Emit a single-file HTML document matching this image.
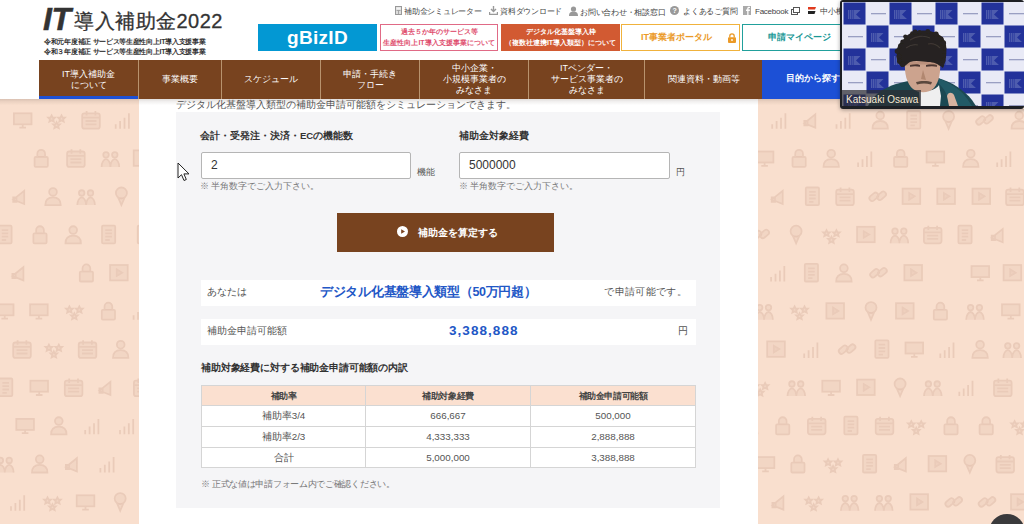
<!DOCTYPE html>
<html lang="ja">
<head>
<meta charset="utf-8">
<title>IT導入補助金2022</title>
<style>
*{box-sizing:border-box;margin:0;padding:0}
html,body{width:1024px;height:524px;overflow:hidden}
body{position:relative;background:#f9dfce;font-family:"Liberation Sans",sans-serif;color:#333}
.abs{position:absolute}
#header{position:absolute;left:0;top:0;width:1024px;height:99px;background:#fff}
.logo-it{position:absolute;left:43px;top:3px;-webkit-text-stroke:0.5px #333;font-size:32px;font-weight:bold;font-style:italic;color:#333;letter-spacing:-0.5px;line-height:32px}
.logo-jp{position:absolute;left:74px;top:10px;font-size:20px;color:#333;line-height:22px;letter-spacing:0.5px;-webkit-text-stroke:0.3px #333}
.sub{position:absolute;left:44px;font-size:7px;font-weight:bold;color:#333;line-height:8px;white-space:nowrap;letter-spacing:-0.3px}
.toplink{position:absolute;top:6px;font-size:8px;color:#444;line-height:10px;white-space:nowrap;letter-spacing:-0.25px}
.btn{position:absolute;top:24px;height:27px;text-align:center;white-space:nowrap}
#nav{position:absolute;left:39px;top:60px;height:39px;width:946px;background:#78431f}
.ni{position:absolute;top:0;height:39px;color:#fff;font-size:9px;line-height:11px;display:flex;align-items:center;justify-content:center;text-align:center;border-left:1px solid #b8936e}
#content{position:absolute;left:139px;top:99px;width:619px;height:425px;background:#fff}
#panel{position:absolute;left:176px;top:112px;width:544px;height:396px;background:#f5f5f7}
.lbl{font-size:9.5px;font-weight:bold;color:#333;white-space:nowrap;line-height:12px}
.inp{height:27px;background:#fff;border:1px solid #b5b5b5;border-radius:2px;font-size:12px;color:#333;padding-left:9px;line-height:25px}
.unit{font-size:9px;color:#555;line-height:11px}
.note{font-size:8.5px;color:#777;line-height:10px;white-space:nowrap}
.calc{background:#78431f;color:#fff;font-size:10px;font-weight:bold;text-align:center;line-height:40px}
.row{background:#fff}
.row span{white-space:nowrap;line-height:12px}
.blue{color:#2257c6;font-weight:bold;line-height:14px!important}
.tbl{border-collapse:collapse;font-size:9.8px;color:#555;background:#fff;width:495px;table-layout:fixed}
.tbl td{border:1px solid #d5d5d5;height:20px;text-align:center;padding:0;line-height:18px}
.tbl tr[style] td{height:21px}
.tbl .th td{background:#fbe0d0;font-weight:bold;font-size:9px;letter-spacing:-0.4px;color:#444}
</style>
</head>
<body>
<svg class="abs" style="left:0;top:99px" width="1024" height="425" viewBox="0 99 1024 425"><defs><filter id="ib"><feGaussianBlur stdDeviation="0.45"/></filter></defs><g fill="rgba(226,192,172,0.28)" stroke="#eacbb9" stroke-width="1.6" filter="url(#ib)"><g transform="translate(-22.3,110.0) scale(1.1)"><circle cx="5" cy="6" r="2.5"/><circle cx="13" cy="6" r="2.5"/><path d="M1 17c0-4 2-7 4-7s4 3 4 7M9 17c0-4 2-7 4-7s4 3 4 7"/></g><g transform="translate(12.8,110.0) scale(1.1)"><rect x="1" y="3" width="16" height="10"/><path d="M6 16h6M9 13v3"/></g><g transform="translate(47.2,110.0) scale(1.1)"><path d="M4 5l1 2h2l-1.5 1.5.5 2-2-1-2 1 .5-2L1 7h2zM13 5l1 2h2l-1.5 1.5.5 2-2-1-2 1 .5-2L10 7h2zM8.5 11l1 2h2l-1.5 1.5.5 2-2-1-2 1 .5-2L5.5 13h2z"/></g><g transform="translate(81.1,110.0) scale(1.1)"><rect x="1" y="3" width="16" height="14" rx="2"/><path d="M1 7h16M5 1v4M13 1v4M4 10h10M4 13h10"/></g><g transform="translate(113.5,110.0) scale(1.1)"><path d="M2 17v-4M6 17v-7M10 17v-10M14 17v-14"/></g><g transform="translate(31.3,148.2) scale(1.1)"><rect x="3" y="8" width="12" height="9" rx="1"/><path d="M5.5 8V5a3.5 3.5 0 0 1 7 0v3"/></g><g transform="translate(66.0,148.2) scale(1.1)"><rect x="1" y="3" width="16" height="14" rx="2"/><path d="M1 7h16M5 1v4M13 1v4M4 10h10M4 13h10"/></g><g transform="translate(100.5,148.2) scale(1.1)"><circle cx="5" cy="6" r="2.5"/><circle cx="13" cy="6" r="2.5"/><path d="M1 17c0-4 2-7 4-7s4 3 4 7M9 17c0-4 2-7 4-7s4 3 4 7"/></g><g transform="translate(132.6,148.2) scale(1.1)"><rect x="1" y="2" width="16" height="14"/><path d="M7 6v6l5-3z"/></g><g transform="translate(-23.0,186.4) scale(1.1)"><rect x="1" y="3" width="16" height="14" rx="2"/><path d="M1 7h16M5 1v4M13 1v4M4 10h10M4 13h10"/></g><g transform="translate(11.0,186.4) scale(1.1)"><path d="M2 12l10-8v12z M2 10v4h3v-4z"/></g><g transform="translate(43.1,186.4) scale(1.1)"><circle cx="9" cy="5" r="3.5"/><path d="M2 17c0-5 3-7 7-7s7 2 7 7z"/></g><g transform="translate(76.2,186.4) scale(1.1)"><circle cx="5" cy="6" r="2.5"/><circle cx="13" cy="6" r="2.5"/><path d="M1 17c0-4 2-7 4-7s4 3 4 7M9 17c0-4 2-7 4-7s4 3 4 7"/></g><g transform="translate(111.5,186.4) scale(1.1)"><circle cx="9" cy="6" r="5"/><path d="M6 10l3 7 3-7"/></g><g transform="translate(-4.9,224.6) scale(1.1)"><rect x="3" y="1" width="12" height="16" rx="1"/><path d="M6 5h6M6 8h6M6 11h6M6 14h4"/></g><g transform="translate(30.1,224.6) scale(1.1)"><rect x="3" y="8" width="12" height="9" rx="1"/><path d="M5.5 8V5a3.5 3.5 0 0 1 7 0v3"/></g><g transform="translate(63.3,224.6) scale(1.1)"><circle cx="9" cy="5" r="3.5"/><path d="M2 17c0-5 3-7 7-7s7 2 7 7z"/></g><g transform="translate(98.7,224.6) scale(1.1)"><rect x="3" y="1" width="12" height="16" rx="1"/><path d="M6 5h6M6 8h6M6 11h6M6 14h4"/></g><g transform="translate(134.4,224.6) scale(1.1)"><rect x="3" y="1" width="12" height="16" rx="1"/><path d="M6 5h6M6 8h6M6 11h6M6 14h4"/></g><g transform="translate(-22.6,262.8) scale(1.1)"><circle cx="9" cy="5" r="3.5"/><path d="M2 17c0-5 3-7 7-7s7 2 7 7z"/></g><g transform="translate(10.2,262.8) scale(1.1)"><path d="M2 12l10-8v12z M2 10v4h3v-4z"/></g><g transform="translate(76.5,262.8) scale(1.1)"><rect x="3" y="8" width="12" height="9" rx="1"/><path d="M5.5 8V5a3.5 3.5 0 0 1 7 0v3"/></g><g transform="translate(109.0,262.8) scale(1.1)"><rect x="1" y="2" width="16" height="14"/><path d="M7 6v6l5-3z"/></g><g transform="translate(-5.2,301.0) scale(1.1)"><rect x="1" y="3" width="16" height="10"/><path d="M6 16h6M9 13v3"/></g><g transform="translate(29.0,301.0) scale(1.1)"><rect x="1" y="3" width="16" height="10"/><path d="M6 16h6M9 13v3"/></g><g transform="translate(65.0,301.0) scale(1.1)"><path d="M4 5l1 2h2l-1.5 1.5.5 2-2-1-2 1 .5-2L1 7h2zM13 5l1 2h2l-1.5 1.5.5 2-2-1-2 1 .5-2L10 7h2zM8.5 11l1 2h2l-1.5 1.5.5 2-2-1-2 1 .5-2L5.5 13h2z"/></g><g transform="translate(98.5,301.0) scale(1.1)"><rect x="3" y="8" width="12" height="9" rx="1"/><path d="M5.5 8V5a3.5 3.5 0 0 1 7 0v3"/></g><g transform="translate(131.4,301.0) scale(1.1)"><path d="M2 17v-4M6 17v-7M10 17v-10M14 17v-14"/></g><g transform="translate(-21.4,339.2) scale(1.1)"><rect x="3" y="1" width="12" height="16" rx="1"/><path d="M6 5h6M6 8h6M6 11h6M6 14h4"/></g><g transform="translate(12.1,339.2) scale(1.1)"><rect x="1" y="3" width="16" height="14" rx="2"/><path d="M1 7h16M5 1v4M13 1v4M4 10h10M4 13h10"/></g><g transform="translate(44.5,339.2) scale(1.1)"><path d="M4 5l1 2h2l-1.5 1.5.5 2-2-1-2 1 .5-2L1 7h2zM13 5l1 2h2l-1.5 1.5.5 2-2-1-2 1 .5-2L10 7h2zM8.5 11l1 2h2l-1.5 1.5.5 2-2-1-2 1 .5-2L5.5 13h2z"/></g><g transform="translate(77.6,339.2) scale(1.1)"><rect x="1" y="3" width="16" height="14" rx="2"/><path d="M1 7h16M5 1v4M13 1v4M4 10h10M4 13h10"/></g><g transform="translate(110.8,339.2) scale(1.1)"><circle cx="9" cy="5" r="3.5"/><path d="M2 17c0-5 3-7 7-7s7 2 7 7z"/></g><g transform="translate(-4.2,377.4) scale(1.1)"><rect x="3" y="1" width="12" height="16" rx="1"/><path d="M6 5h6M6 8h6M6 11h6M6 14h4"/></g><g transform="translate(29.3,377.4) scale(1.1)"><rect x="1" y="3" width="16" height="10"/><path d="M6 16h6M9 13v3"/></g><g transform="translate(63.7,377.4) scale(1.1)"><rect x="1" y="3" width="16" height="14" rx="2"/><path d="M1 7h16M5 1v4M13 1v4M4 10h10M4 13h10"/></g><g transform="translate(97.2,377.4) scale(1.1)"><path d="M2 12l10-8v12z M2 10v4h3v-4z"/></g><g transform="translate(132.8,377.4) scale(1.1)"><rect x="1" y="3" width="16" height="14" rx="2"/><path d="M1 7h16M5 1v4M13 1v4M4 10h10M4 13h10"/></g><g transform="translate(-20.6,415.6) scale(1.1)"><circle cx="5" cy="6" r="2.5"/><circle cx="13" cy="6" r="2.5"/><path d="M1 17c0-4 2-7 4-7s4 3 4 7M9 17c0-4 2-7 4-7s4 3 4 7"/></g><g transform="translate(15.2,415.6) scale(1.1)"><rect x="1" y="3" width="16" height="10"/><path d="M6 16h6M9 13v3"/></g><g transform="translate(48.9,415.6) scale(1.1)"><circle cx="9" cy="5" r="3.5"/><path d="M2 17c0-5 3-7 7-7s7 2 7 7z"/></g><g transform="translate(83.0,415.6) scale(1.1)"><path d="M2 17v-4M6 17v-7M10 17v-10M14 17v-14"/></g><g transform="translate(117.8,415.6) scale(1.1)"><path d="M2 17v-4M6 17v-7M10 17v-10M14 17v-14"/></g><g transform="translate(-5.1,453.8) scale(1.1)"><circle cx="5" cy="6" r="2.5"/><circle cx="13" cy="6" r="2.5"/><path d="M1 17c0-4 2-7 4-7s4 3 4 7M9 17c0-4 2-7 4-7s4 3 4 7"/></g><g transform="translate(29.8,453.8) scale(1.1)"><circle cx="9" cy="5" r="3.5"/><path d="M2 17c0-5 3-7 7-7s7 2 7 7z"/></g><g transform="translate(63.7,453.8) scale(1.1)"><path d="M2 12l10-8v12z M2 10v4h3v-4z"/></g><g transform="translate(98.2,453.8) scale(1.1)"><path d="M2 17v-4M6 17v-7M10 17v-10M14 17v-14"/></g><g transform="translate(-23.4,492.0) scale(1.1)"><rect x="1" y="3" width="16" height="10"/><path d="M6 16h6M9 13v3"/></g><g transform="translate(8.8,492.0) scale(1.1)"><path d="M2 17v-4M6 17v-7M10 17v-10M14 17v-14"/></g><g transform="translate(43.1,492.0) scale(1.1)"><path d="M4 5l1 2h2l-1.5 1.5.5 2-2-1-2 1 .5-2L1 7h2zM13 5l1 2h2l-1.5 1.5.5 2-2-1-2 1 .5-2L10 7h2zM8.5 11l1 2h2l-1.5 1.5.5 2-2-1-2 1 .5-2L5.5 13h2z"/></g><g transform="translate(75.6,492.0) scale(1.1)"><rect x="1" y="3" width="16" height="10"/><path d="M6 16h6M9 13v3"/></g><g transform="translate(110.3,492.0) scale(1.1)"><circle cx="9" cy="6" r="5"/><path d="M6 10l3 7 3-7"/></g><g transform="translate(736.5,110.0) scale(1.1)"><rect x="3" y="1" width="12" height="16" rx="1"/><path d="M6 5h6M6 8h6M6 11h6M6 14h4"/></g><g transform="translate(770.0,110.0) scale(1.1)"><path d="M2 17v-4M6 17v-7M10 17v-10M14 17v-14"/></g><g transform="translate(802.1,110.0) scale(1.1)"><path d="M2 12l10-8v12z M2 10v4h3v-4z"/></g><g transform="translate(834.3,110.0) scale(1.1)"><path d="M2 17v-4M6 17v-7M10 17v-10M14 17v-14"/></g><g transform="translate(870.3,110.0) scale(1.1)"><circle cx="9" cy="5" r="3.5"/><path d="M2 17c0-5 3-7 7-7s7 2 7 7z"/></g><g transform="translate(903.8,110.0) scale(1.1)"><rect x="3" y="1" width="12" height="16" rx="1"/><path d="M6 5h6M6 8h6M6 11h6M6 14h4"/></g><g transform="translate(938.7,110.0) scale(1.1)"><circle cx="9" cy="6" r="5"/><path d="M6 10l3 7 3-7"/></g><g transform="translate(974.6,110.0) scale(1.1)"><rect x="1" y="7" width="9" height="5" rx="2.5" transform="rotate(-40 5.5 9.5)"/><rect x="8" y="6" width="9" height="5" rx="2.5" transform="rotate(-40 12.5 8.5)"/></g><g transform="translate(1009.3,110.0) scale(1.1)"><circle cx="9" cy="5" r="3.5"/><path d="M2 17c0-5 3-7 7-7s7 2 7 7z"/></g><g transform="translate(754.7,148.2) scale(1.1)"><rect x="1" y="3" width="16" height="10"/><path d="M6 16h6M9 13v3"/></g><g transform="translate(789.2,148.2) scale(1.1)"><rect x="3" y="8" width="12" height="9" rx="1"/><path d="M5.5 8V5a3.5 3.5 0 0 1 7 0v3"/></g><g transform="translate(821.3,148.2) scale(1.1)"><circle cx="9" cy="5" r="3.5"/><path d="M2 17c0-5 3-7 7-7s7 2 7 7z"/></g><g transform="translate(855.9,148.2) scale(1.1)"><path d="M2 17v-4M6 17v-7M10 17v-10M14 17v-14"/></g><g transform="translate(890.8,148.2) scale(1.1)"><rect x="3" y="8" width="12" height="9" rx="1"/><path d="M5.5 8V5a3.5 3.5 0 0 1 7 0v3"/></g><g transform="translate(925.5,148.2) scale(1.1)"><rect x="1" y="3" width="16" height="10"/><path d="M6 16h6M9 13v3"/></g><g transform="translate(960.9,148.2) scale(1.1)"><circle cx="9" cy="5" r="3.5"/><path d="M2 17c0-5 3-7 7-7s7 2 7 7z"/></g><g transform="translate(995.0,148.2) scale(1.1)"><path d="M2 17v-4M6 17v-7M10 17v-10M14 17v-14"/></g><g transform="translate(734.4,186.4) scale(1.1)"><circle cx="9" cy="6" r="5"/><path d="M6 10l3 7 3-7"/></g><g transform="translate(769.5,186.4) scale(1.1)"><path d="M2 12l10-8v12z M2 10v4h3v-4z"/></g><g transform="translate(802.5,186.4) scale(1.1)"><rect x="3" y="1" width="12" height="16" rx="1"/><path d="M6 5h6M6 8h6M6 11h6M6 14h4"/></g><g transform="translate(835.1,186.4) scale(1.1)"><rect x="1" y="3" width="16" height="14" rx="2"/><path d="M1 7h16M5 1v4M13 1v4M4 10h10M4 13h10"/></g><g transform="translate(867.8,186.4) scale(1.1)"><rect x="1" y="7" width="9" height="5" rx="2.5" transform="rotate(-40 5.5 9.5)"/><rect x="8" y="6" width="9" height="5" rx="2.5" transform="rotate(-40 12.5 8.5)"/></g><g transform="translate(901.5,186.4) scale(1.1)"><rect x="1" y="2" width="16" height="14"/><path d="M7 6v6l5-3z"/></g><g transform="translate(936.2,186.4) scale(1.1)"><rect x="1" y="2" width="16" height="14"/><path d="M7 6v6l5-3z"/></g><g transform="translate(971.4,186.4) scale(1.1)"><rect x="1" y="2" width="16" height="14"/><path d="M7 6v6l5-3z"/></g><g transform="translate(1005.0,186.4) scale(1.1)"><rect x="1" y="3" width="16" height="14" rx="2"/><path d="M1 7h16M5 1v4M13 1v4M4 10h10M4 13h10"/></g><g transform="translate(750.8,224.6) scale(1.1)"><rect x="1" y="7" width="9" height="5" rx="2.5" transform="rotate(-40 5.5 9.5)"/><rect x="8" y="6" width="9" height="5" rx="2.5" transform="rotate(-40 12.5 8.5)"/></g><g transform="translate(786.2,224.6) scale(1.1)"><circle cx="9" cy="6" r="5"/><path d="M6 10l3 7 3-7"/></g><g transform="translate(822.1,224.6) scale(1.1)"><path d="M4 5l1 2h2l-1.5 1.5.5 2-2-1-2 1 .5-2L1 7h2zM13 5l1 2h2l-1.5 1.5.5 2-2-1-2 1 .5-2L10 7h2zM8.5 11l1 2h2l-1.5 1.5.5 2-2-1-2 1 .5-2L5.5 13h2z"/></g><g transform="translate(856.0,224.6) scale(1.1)"><rect x="1" y="2" width="16" height="14"/><path d="M7 6v6l5-3z"/></g><g transform="translate(889.5,224.6) scale(1.1)"><circle cx="5" cy="6" r="2.5"/><circle cx="13" cy="6" r="2.5"/><path d="M1 17c0-4 2-7 4-7s4 3 4 7M9 17c0-4 2-7 4-7s4 3 4 7"/></g><g transform="translate(922.8,224.6) scale(1.1)"><rect x="1" y="3" width="16" height="14" rx="2"/><path d="M1 7h16M5 1v4M13 1v4M4 10h10M4 13h10"/></g><g transform="translate(955.1,224.6) scale(1.1)"><rect x="3" y="1" width="12" height="16" rx="1"/><path d="M6 5h6M6 8h6M6 11h6M6 14h4"/></g><g transform="translate(989.5,224.6) scale(1.1)"><path d="M2 12l10-8v12z M2 10v4h3v-4z"/></g><g transform="translate(1023.8,224.6) scale(1.1)"><path d="M2 17v-4M6 17v-7M10 17v-10M14 17v-14"/></g><g transform="translate(736.8,262.8) scale(1.1)"><rect x="3" y="8" width="12" height="9" rx="1"/><path d="M5.5 8V5a3.5 3.5 0 0 1 7 0v3"/></g><g transform="translate(768.9,262.8) scale(1.1)"><path d="M2 17v-4M6 17v-7M10 17v-10M14 17v-14"/></g><g transform="translate(801.5,262.8) scale(1.1)"><rect x="3" y="1" width="12" height="16" rx="1"/><path d="M6 5h6M6 8h6M6 11h6M6 14h4"/></g><g transform="translate(834.0,262.8) scale(1.1)"><circle cx="9" cy="5" r="3.5"/><path d="M2 17c0-5 3-7 7-7s7 2 7 7z"/></g><g transform="translate(868.6,262.8) scale(1.1)"><rect x="1" y="7" width="9" height="5" rx="2.5" transform="rotate(-40 5.5 9.5)"/><rect x="8" y="6" width="9" height="5" rx="2.5" transform="rotate(-40 12.5 8.5)"/></g><g transform="translate(903.3,262.8) scale(1.1)"><rect x="1" y="2" width="16" height="14"/><path d="M7 6v6l5-3z"/></g><g transform="translate(970.4,262.8) scale(1.1)"><rect x="1" y="3" width="16" height="10"/><path d="M6 16h6M9 13v3"/></g><g transform="translate(1002.5,262.8) scale(1.1)"><rect x="1" y="2" width="16" height="14"/><path d="M7 6v6l5-3z"/></g><g transform="translate(754.2,301.0) scale(1.1)"><circle cx="5" cy="6" r="2.5"/><circle cx="13" cy="6" r="2.5"/><path d="M1 17c0-4 2-7 4-7s4 3 4 7M9 17c0-4 2-7 4-7s4 3 4 7"/></g><g transform="translate(790.2,301.0) scale(1.1)"><path d="M4 5l1 2h2l-1.5 1.5.5 2-2-1-2 1 .5-2L1 7h2zM13 5l1 2h2l-1.5 1.5.5 2-2-1-2 1 .5-2L10 7h2zM8.5 11l1 2h2l-1.5 1.5.5 2-2-1-2 1 .5-2L5.5 13h2z"/></g><g transform="translate(825.3,301.0) scale(1.1)"><rect x="1" y="2" width="16" height="14"/><path d="M7 6v6l5-3z"/></g><g transform="translate(861.1,301.0) scale(1.1)"><circle cx="9" cy="6" r="5"/><path d="M6 10l3 7 3-7"/></g><g transform="translate(894.9,301.0) scale(1.1)"><rect x="1" y="2" width="16" height="14"/><path d="M7 6v6l5-3z"/></g><g transform="translate(930.5,301.0) scale(1.1)"><rect x="3" y="8" width="12" height="9" rx="1"/><path d="M5.5 8V5a3.5 3.5 0 0 1 7 0v3"/></g><g transform="translate(965.1,301.0) scale(1.1)"><circle cx="5" cy="6" r="2.5"/><circle cx="13" cy="6" r="2.5"/><path d="M1 17c0-4 2-7 4-7s4 3 4 7M9 17c0-4 2-7 4-7s4 3 4 7"/></g><g transform="translate(1000.9,301.0) scale(1.1)"><rect x="1" y="3" width="16" height="10"/><path d="M6 16h6M9 13v3"/></g><g transform="translate(733.6,339.2) scale(1.1)"><path d="M2 12l10-8v12z M2 10v4h3v-4z"/></g><g transform="translate(766.1,339.2) scale(1.1)"><rect x="1" y="2" width="16" height="14"/><path d="M7 6v6l5-3z"/></g><g transform="translate(802.0,339.2) scale(1.1)"><path d="M2 17v-4M6 17v-7M10 17v-10M14 17v-14"/></g><g transform="translate(837.2,339.2) scale(1.1)"><rect x="1" y="7" width="9" height="5" rx="2.5" transform="rotate(-40 5.5 9.5)"/><rect x="8" y="6" width="9" height="5" rx="2.5" transform="rotate(-40 12.5 8.5)"/></g><g transform="translate(872.0,339.2) scale(1.1)"><rect x="3" y="1" width="12" height="16" rx="1"/><path d="M6 5h6M6 8h6M6 11h6M6 14h4"/></g><g transform="translate(904.4,339.2) scale(1.1)"><rect x="1" y="3" width="16" height="10"/><path d="M6 16h6M9 13v3"/></g><g transform="translate(938.1,339.2) scale(1.1)"><path d="M2 17v-4M6 17v-7M10 17v-10M14 17v-14"/></g><g transform="translate(970.2,339.2) scale(1.1)"><circle cx="9" cy="5" r="3.5"/><path d="M2 17c0-5 3-7 7-7s7 2 7 7z"/></g><g transform="translate(1002.3,339.2) scale(1.1)"><circle cx="5" cy="6" r="2.5"/><circle cx="13" cy="6" r="2.5"/><path d="M1 17c0-4 2-7 4-7s4 3 4 7M9 17c0-4 2-7 4-7s4 3 4 7"/></g><g transform="translate(750.8,377.4) scale(1.1)"><path d="M4 5l1 2h2l-1.5 1.5.5 2-2-1-2 1 .5-2L1 7h2zM13 5l1 2h2l-1.5 1.5.5 2-2-1-2 1 .5-2L10 7h2zM8.5 11l1 2h2l-1.5 1.5.5 2-2-1-2 1 .5-2L5.5 13h2z"/></g><g transform="translate(786.4,377.4) scale(1.1)"><circle cx="5" cy="6" r="2.5"/><circle cx="13" cy="6" r="2.5"/><path d="M1 17c0-4 2-7 4-7s4 3 4 7M9 17c0-4 2-7 4-7s4 3 4 7"/></g><g transform="translate(821.2,377.4) scale(1.1)"><rect x="1" y="3" width="16" height="10"/><path d="M6 16h6M9 13v3"/></g><g transform="translate(856.0,377.4) scale(1.1)"><rect x="1" y="2" width="16" height="14"/><path d="M7 6v6l5-3z"/></g><g transform="translate(890.2,377.4) scale(1.1)"><circle cx="9" cy="6" r="5"/><path d="M6 10l3 7 3-7"/></g><g transform="translate(922.9,377.4) scale(1.1)"><circle cx="5" cy="6" r="2.5"/><circle cx="13" cy="6" r="2.5"/><path d="M1 17c0-4 2-7 4-7s4 3 4 7M9 17c0-4 2-7 4-7s4 3 4 7"/></g><g transform="translate(957.1,377.4) scale(1.1)"><path d="M2 17v-4M6 17v-7M10 17v-10M14 17v-14"/></g><g transform="translate(992.9,377.4) scale(1.1)"><rect x="1" y="3" width="16" height="14" rx="2"/><path d="M1 7h16M5 1v4M13 1v4M4 10h10M4 13h10"/></g><g transform="translate(738.8,415.6) scale(1.1)"><circle cx="5" cy="6" r="2.5"/><circle cx="13" cy="6" r="2.5"/><path d="M1 17c0-4 2-7 4-7s4 3 4 7M9 17c0-4 2-7 4-7s4 3 4 7"/></g><g transform="translate(772.8,415.6) scale(1.1)"><rect x="3" y="8" width="12" height="9" rx="1"/><path d="M5.5 8V5a3.5 3.5 0 0 1 7 0v3"/></g><g transform="translate(806.8,415.6) scale(1.1)"><rect x="1" y="3" width="16" height="14" rx="2"/><path d="M1 7h16M5 1v4M13 1v4M4 10h10M4 13h10"/></g><g transform="translate(841.0,415.6) scale(1.1)"><rect x="3" y="1" width="12" height="16" rx="1"/><path d="M6 5h6M6 8h6M6 11h6M6 14h4"/></g><g transform="translate(874.6,415.6) scale(1.1)"><rect x="1" y="3" width="16" height="14" rx="2"/><path d="M1 7h16M5 1v4M13 1v4M4 10h10M4 13h10"/></g><g transform="translate(906.9,415.6) scale(1.1)"><path d="M4 5l1 2h2l-1.5 1.5.5 2-2-1-2 1 .5-2L1 7h2zM13 5l1 2h2l-1.5 1.5.5 2-2-1-2 1 .5-2L10 7h2zM8.5 11l1 2h2l-1.5 1.5.5 2-2-1-2 1 .5-2L5.5 13h2z"/></g><g transform="translate(941.1,415.6) scale(1.1)"><rect x="3" y="8" width="12" height="9" rx="1"/><path d="M5.5 8V5a3.5 3.5 0 0 1 7 0v3"/></g><g transform="translate(976.3,415.6) scale(1.1)"><rect x="3" y="8" width="12" height="9" rx="1"/><path d="M5.5 8V5a3.5 3.5 0 0 1 7 0v3"/></g><g transform="translate(1010.2,415.6) scale(1.1)"><path d="M4 5l1 2h2l-1.5 1.5.5 2-2-1-2 1 .5-2L1 7h2zM13 5l1 2h2l-1.5 1.5.5 2-2-1-2 1 .5-2L10 7h2zM8.5 11l1 2h2l-1.5 1.5.5 2-2-1-2 1 .5-2L5.5 13h2z"/></g><g transform="translate(755.6,453.8) scale(1.1)"><rect x="1" y="3" width="16" height="10"/><path d="M6 16h6M9 13v3"/></g><g transform="translate(788.0,453.8) scale(1.1)"><rect x="3" y="8" width="12" height="9" rx="1"/><path d="M5.5 8V5a3.5 3.5 0 0 1 7 0v3"/></g><g transform="translate(823.7,453.8) scale(1.1)"><path d="M4 5l1 2h2l-1.5 1.5.5 2-2-1-2 1 .5-2L1 7h2zM13 5l1 2h2l-1.5 1.5.5 2-2-1-2 1 .5-2L10 7h2zM8.5 11l1 2h2l-1.5 1.5.5 2-2-1-2 1 .5-2L5.5 13h2z"/></g><g transform="translate(859.7,453.8) scale(1.1)"><rect x="3" y="1" width="12" height="16" rx="1"/><path d="M6 5h6M6 8h6M6 11h6M6 14h4"/></g><g transform="translate(892.6,453.8) scale(1.1)"><path d="M2 12l10-8v12z M2 10v4h3v-4z"/></g><g transform="translate(927.5,453.8) scale(1.1)"><rect x="1" y="2" width="16" height="14"/><path d="M7 6v6l5-3z"/></g><g transform="translate(959.9,453.8) scale(1.1)"><circle cx="9" cy="6" r="5"/><path d="M6 10l3 7 3-7"/></g><g transform="translate(995.3,453.8) scale(1.1)"><rect x="1" y="3" width="16" height="14" rx="2"/><path d="M1 7h16M5 1v4M13 1v4M4 10h10M4 13h10"/></g><g transform="translate(770.2,492.0) scale(1.1)"><path d="M2 12l10-8v12z M2 10v4h3v-4z"/></g><g transform="translate(804.3,492.0) scale(1.1)"><path d="M4 5l1 2h2l-1.5 1.5.5 2-2-1-2 1 .5-2L1 7h2zM13 5l1 2h2l-1.5 1.5.5 2-2-1-2 1 .5-2L10 7h2zM8.5 11l1 2h2l-1.5 1.5.5 2-2-1-2 1 .5-2L5.5 13h2z"/></g><g transform="translate(839.8,492.0) scale(1.1)"><circle cx="5" cy="6" r="2.5"/><circle cx="13" cy="6" r="2.5"/><path d="M1 17c0-4 2-7 4-7s4 3 4 7M9 17c0-4 2-7 4-7s4 3 4 7"/></g><g transform="translate(873.9,492.0) scale(1.1)"><circle cx="5" cy="6" r="2.5"/><circle cx="13" cy="6" r="2.5"/><path d="M1 17c0-4 2-7 4-7s4 3 4 7M9 17c0-4 2-7 4-7s4 3 4 7"/></g><g transform="translate(909.3,492.0) scale(1.1)"><rect x="1" y="2" width="16" height="14"/><path d="M7 6v6l5-3z"/></g><g transform="translate(943.8,492.0) scale(1.1)"><rect x="1" y="7" width="9" height="5" rx="2.5" transform="rotate(-40 5.5 9.5)"/><rect x="8" y="6" width="9" height="5" rx="2.5" transform="rotate(-40 12.5 8.5)"/></g><g transform="translate(977.1,492.0) scale(1.1)"><rect x="1" y="7" width="9" height="5" rx="2.5" transform="rotate(-40 5.5 9.5)"/><rect x="8" y="6" width="9" height="5" rx="2.5" transform="rotate(-40 12.5 8.5)"/></g><g transform="translate(1009.9,492.0) scale(1.1)"><rect x="1" y="2" width="16" height="14"/><path d="M7 6v6l5-3z"/></g></g></svg>
<div id="header">
  <div class="logo-it">IT</div>
  <div class="logo-jp">導入補助金2022</div>
  <div class="sub" style="top:38px">令和元年度補正 サービス等生産性向上IT導入支援事業</div>
  <div class="sub" style="top:48px">令和３年度補正 サービス等生産性向上IT導入支援事業</div>

  <div class="toplink" style="left:394px"><svg width="7" height="9" viewBox="0 0 7 9" style="vertical-align:-1.5px;margin-left:1px;margin-right:2px"><rect x="0.5" y="0.5" width="6" height="8" fill="#ddd" stroke="#999"/><path d="M1.5 4.5h4M3.5 4.5v3.5" stroke="#999" stroke-width="0.8"/><rect x="1.5" y="1.5" width="4" height="2" fill="#f4f4f4"/></svg>補助金シミュレーター</div>
  <div class="toplink" style="left:489px"><svg width="9" height="9" viewBox="0 0 9 9" style="vertical-align:-1px;margin-right:2px"><path d="M4.5 0v5M2 3l2.5 2.5L7 3M0.5 6v2.5h8V6" stroke="#999" stroke-width="1.4" fill="none"/></svg>資料ダウンロード</div>
  <div class="toplink" style="left:569px"><svg width="9" height="10" viewBox="0 0 9 10" style="vertical-align:-1px;margin-right:2px"><circle cx="4.5" cy="3" r="2.6" fill="#999"/><path d="M0 10c0-3.5 2-4.5 4.5-4.5S9 6.5 9 10z" fill="#999"/></svg>お問い合わせ・相談窓口</div>
  <div class="toplink" style="left:670px"><svg width="9" height="9" viewBox="0 0 9 9" style="vertical-align:-1px;margin-right:4px"><circle cx="4.5" cy="4.5" r="4.5" fill="#999"/><text x="4.5" y="7.3" font-size="7" font-weight="bold" fill="#fff" text-anchor="middle" font-family="Liberation Sans">?</text></svg>よくあるご質問</div>
  <div class="toplink" style="left:743px"><svg width="8" height="9" viewBox="0 0 8 9" style="vertical-align:-1px;margin-right:4px"><rect width="8" height="9" fill="#aaa"/><path d="M5.5 9V5h1.3l.2-1.4H5.5V2.8c0-.4.1-.7.7-.7H7V.9C6.8.9 6.400.8 6 .8 5 .8 4.2 1.4 4.2 2.6v1H3V5h1.2v4z" fill="#fff"/></svg>Facebook<svg width="9" height="8" viewBox="0 0 9 8" style="vertical-align:-1px;margin-left:3px"><rect x="0.5" y="2.5" width="6" height="5" stroke="#555" fill="none"/><rect x="2.5" y="0.5" width="6" height="5" stroke="#555" fill="#fff"/></svg></div>
  <div class="toplink" style="left:808px"><svg width="8" height="9" viewBox="0 0 8 9" style="vertical-align:-1px;margin-right:4px"><path d="M0 1h8L7 3.5H0z" fill="#e03a1e"/><path d="M0 5h7.5L6.5 8H0z" fill="#222"/></svg>中小機構</div>
  <div class="btn" style="left:258px;width:119px;background:#0398d3;color:#fff;font-size:19px;font-weight:bold;line-height:27px;letter-spacing:0.3px">gBizID</div>
  <div class="btn" style="left:380px;width:118px;border:1.5px solid #e06a86;color:#e0506f;font-size:7px;line-height:11px;padding-top:0.5px;font-weight:bold;letter-spacing:0px">過去５か年のサービス等<br>生産性向上IT導入支援事業について</div>
  <div class="btn" style="left:501px;width:119px;background:#d25a32;color:#fff;font-size:7px;line-height:11px;padding-top:1.5px;font-weight:bold;letter-spacing:0px">デジタル化基盤導入枠<br>（複数社連携IT導入類型）について</div>
  <div class="btn" style="left:621px;width:119px;border:1.5px solid #f0b23c;color:#eb9a28;font-size:9px;line-height:24px;font-weight:bold;padding-right:8px">IT事業者ポータル<svg width="8" height="10" viewBox="0 0 8 10" style="position:absolute;left:106px;top:8px"><path d="M1.8 4.5V3a2.2 2.2 0 0 1 4.4 0v1.5" stroke="#eb9a28" stroke-width="1.3" fill="none"/><rect x="0" y="4.3" width="8" height="5.7" rx="1" fill="#eb9a28"/><circle cx="4" cy="7" r="0.9" fill="#fff"/></svg></div>
  <div class="btn" style="left:742px;width:120px;border:1.5px solid #21a09c;color:#1a9896;font-size:9px;line-height:24px;font-weight:bold;padding-right:6px">申請マイページ</div>
</div>
<div id="nav">
  <div class="ni" style="left:0;width:99px;border-left:none"><span>IT導入補助金<br>について</span></div>
  <div class="ni" style="left:99px;width:83px"><span>事業概要</span></div>
  <div class="ni" style="left:182px;width:99px"><span>スケジュール</span></div>
  <div class="ni" style="left:281px;width:99px"><span>申請・手続き<br>フロー</span></div>
  <div class="ni" style="left:380px;width:109px"><span>中小企業・<br>小規模事業者の<br>みなさま</span></div>
  <div class="ni" style="left:489px;width:116px"><span>ITベンダー・<br>サービス事業者の<br>みなさま</span></div>
  <div class="ni" style="left:605px;width:118px"><span>関連資料・動画等</span></div>
  <div class="ni" style="left:723px;width:223px;background:#1c50d6;border-left:none;justify-content:flex-start;padding-left:24px;padding-bottom:2px;font-weight:bold;font-size:9px;letter-spacing:-0.1px"><span>目的から探す</span></div>
  <div class="abs" style="left:0;top:36px;width:99px;height:3px;background:#1c50d6"></div>
</div>
<div id="content">
  
</div>
<div class="abs intro" style="left:176px;top:98.5px;font-size:10px;color:#555;line-height:12px;white-space:nowrap;letter-spacing:0px">デジタル化基盤導入類型の補助金申請可能額をシミュレーションできます。</div>
<div id="panel">
  <div class="abs lbl" style="left:24px;top:18px">会計・受発注・決済・ECの機能数</div>
  <div class="abs inp" style="left:25px;top:40px;width:210px">2</div>
  <div class="abs unit" style="left:241px;top:55px">機能</div>
  <div class="abs note" style="left:24px;top:69px">※ 半角数字でご入力下さい。</div>
  <div class="abs lbl" style="left:283px;top:18px">補助金対象経費</div>
  <div class="abs inp" style="left:283px;top:40px;width:211px">5000000</div>
  <div class="abs unit" style="left:500px;top:55px">円</div>
  <div class="abs note" style="left:283px;top:69px">※ 半角数字でご入力下さい。</div>
  <div class="abs calc" style="left:161px;top:100.5px;width:217px;height:39.5px;padding-left:3px"><svg width="11" height="11" viewBox="0 0 11 11" style="vertical-align:-1.5px;margin-right:10px"><circle cx="5.5" cy="5.5" r="5.5" fill="#fff"/><path d="M4.2 3.2v4.6L8 5.5z" fill="#7a431e"/></svg>補助金を算定する</div>
  <div class="abs row" style="left:25px;top:168px;width:495px;height:26px">
    <span class="abs" style="left:6px;top:6px;font-size:9.5px;color:#555">あなたは</span>
    <span class="abs blue" style="left:119px;top:5px;font-size:12.5px;letter-spacing:-0.3px">デジタル化基盤導入類型（50万円超）</span>
    <span class="abs" style="right:9px;top:6px;font-size:9.5px;color:#555;letter-spacing:0.35px">で申請可能です。</span>
  </div>
  <div class="abs row" style="left:25px;top:207px;width:495px;height:26px">
    <span class="abs" style="left:6px;top:6px;font-size:9.5px;color:#555">補助金申請可能額</span>
    <span class="abs blue" style="left:248px;top:5px;font-size:13.5px;letter-spacing:1.05px">3,388,888</span>
    <span class="abs" style="right:8px;top:6px;font-size:9.5px;color:#555">円</span>
  </div>
  <div class="abs lbl" style="left:25px;top:250px;font-size:10px;letter-spacing:-0.15px">補助対象経費に対する補助金申請可能額の内訳</div>
  <table class="abs tbl" style="left:25px;top:273px">
    <tr class="th"><td style="width:164px">補助率</td><td style="width:165px">補助対象経費</td><td>補助金申請可能額</td></tr>
    <tr style="height:21px"><td>補助率3/4</td><td>666,667</td><td>500,000</td></tr>
    <tr style="height:21px"><td>補助率2/3</td><td>4,333,333</td><td>2,888,888</td></tr>
    <tr><td>合計</td><td>5,000,000</td><td>3,388,888</td></tr>
  </table>
  <div class="abs note" style="left:25px;top:367px;font-size:9px;letter-spacing:-0.3px">※ 正式な値は申請フォーム内でご確認ください。</div>
</div>
<div class="abs" style="left:0;top:99px;width:1024px;height:6px;background:linear-gradient(rgba(60,40,30,0.16),rgba(60,40,30,0.07) 40%,rgba(60,40,30,0))"></div>
<svg class="abs" style="left:176.5px;top:162px" width="14" height="20" viewBox="0 0 14 20"><path d="M1 1v15l3.5-3.3 2.5 5.8 2.3-1-2.4-5.6H12z" fill="#fff" stroke="#222" stroke-width="1" stroke-linejoin="round"/></svg>
<div class="abs" style="left:989px;top:514px;width:36px;height:36px;border-radius:50%;background:#3a3a3c"></div>
<div class="abs" style="left:840px;top:0;width:190px;height:109px;border-radius:3px;box-shadow:0 1px 4px rgba(0,0,0,0.35)"></div>
<svg class="abs" style="left:840px;top:0" width="184" height="109" viewBox="0 0 184 109">
<rect x="0" y="0" width="184" height="109" rx="3" fill="#1d1f24"/>
<defs><filter id="soft" x="-10%" y="-10%" width="120%" height="120%"><feGaussianBlur stdDeviation="0.6"/></filter></defs><clipPath id="vc"><rect x="2" y="2" width="182" height="104"/></clipPath>
<g clip-path="url(#vc)">
<rect x="0" y="0" width="184" height="109" fill="#e9eaf6"/>
<rect x="3.5" y="2.5" width="22" height="22" fill="#23329a"/>
<g fill="#4e5cae"><rect x="8" y="10" width="1.2" height="9"/><rect x="9.8" y="10" width="1.2" height="9"/><rect x="11.6" y="10" width="1.2" height="9"/><path d="M13.5 10h7l-4.5 4.5 5 4.5h-7.5z"/></g>
<rect x="31" y="13" width="15" height="1.3" fill="#9a9fc2"/>
<rect x="49.5" y="2.5" width="22" height="22" fill="#23329a"/>
<g fill="#4e5cae"><rect x="54" y="10" width="1.2" height="9"/><rect x="55.8" y="10" width="1.2" height="9"/><rect x="57.6" y="10" width="1.2" height="9"/><path d="M59.5 10h7l-4.5 4.5 5 4.5h-7.5z"/></g>
<rect x="77" y="13" width="15" height="1.3" fill="#9a9fc2"/>
<rect x="95.5" y="2.5" width="22" height="22" fill="#23329a"/>
<g fill="#4e5cae"><rect x="100" y="10" width="1.2" height="9"/><rect x="101.8" y="10" width="1.2" height="9"/><rect x="103.6" y="10" width="1.2" height="9"/><path d="M105.5 10h7l-4.5 4.5 5 4.5h-7.5z"/></g>
<rect x="123" y="13" width="15" height="1.3" fill="#9a9fc2"/>
<rect x="141.5" y="2.5" width="22" height="22" fill="#23329a"/>
<g fill="#4e5cae"><rect x="146" y="10" width="1.2" height="9"/><rect x="147.8" y="10" width="1.2" height="9"/><rect x="149.6" y="10" width="1.2" height="9"/><path d="M151.5 10h7l-4.5 4.5 5 4.5h-7.5z"/></g>
<rect x="169" y="13" width="15" height="1.3" fill="#9a9fc2"/>
<rect x="8" y="36" width="15" height="1.3" fill="#9a9fc2"/>
<rect x="26.5" y="25.5" width="22" height="22" fill="#23329a"/>
<g fill="#4e5cae"><rect x="31" y="33" width="1.2" height="9"/><rect x="32.8" y="33" width="1.2" height="9"/><rect x="34.6" y="33" width="1.2" height="9"/><path d="M36.5 33h7l-4.5 4.5 5 4.5h-7.5z"/></g>
<rect x="54" y="36" width="15" height="1.3" fill="#9a9fc2"/>
<rect x="72.5" y="25.5" width="22" height="22" fill="#23329a"/>
<g fill="#4e5cae"><rect x="77" y="33" width="1.2" height="9"/><rect x="78.8" y="33" width="1.2" height="9"/><rect x="80.6" y="33" width="1.2" height="9"/><path d="M82.5 33h7l-4.5 4.5 5 4.5h-7.5z"/></g>
<rect x="100" y="36" width="15" height="1.3" fill="#9a9fc2"/>
<rect x="118.5" y="25.5" width="22" height="22" fill="#23329a"/>
<g fill="#4e5cae"><rect x="123" y="33" width="1.2" height="9"/><rect x="124.8" y="33" width="1.2" height="9"/><rect x="126.6" y="33" width="1.2" height="9"/><path d="M128.5 33h7l-4.5 4.5 5 4.5h-7.5z"/></g>
<rect x="146" y="36" width="15" height="1.3" fill="#9a9fc2"/>
<rect x="164.5" y="25.5" width="22" height="22" fill="#23329a"/>
<g fill="#4e5cae"><rect x="169" y="33" width="1.2" height="9"/><rect x="170.8" y="33" width="1.2" height="9"/><rect x="172.6" y="33" width="1.2" height="9"/><path d="M174.5 33h7l-4.5 4.5 5 4.5h-7.5z"/></g>
<rect x="3.5" y="48.5" width="22" height="22" fill="#23329a"/>
<g fill="#4e5cae"><rect x="8" y="56" width="1.2" height="9"/><rect x="9.8" y="56" width="1.2" height="9"/><rect x="11.6" y="56" width="1.2" height="9"/><path d="M13.5 56h7l-4.5 4.5 5 4.5h-7.5z"/></g>
<rect x="31" y="59" width="15" height="1.3" fill="#9a9fc2"/>
<rect x="49.5" y="48.5" width="22" height="22" fill="#23329a"/>
<g fill="#4e5cae"><rect x="54" y="56" width="1.2" height="9"/><rect x="55.8" y="56" width="1.2" height="9"/><rect x="57.6" y="56" width="1.2" height="9"/><path d="M59.5 56h7l-4.5 4.5 5 4.5h-7.5z"/></g>
<rect x="77" y="59" width="15" height="1.3" fill="#9a9fc2"/>
<rect x="95.5" y="48.5" width="22" height="22" fill="#23329a"/>
<g fill="#4e5cae"><rect x="100" y="56" width="1.2" height="9"/><rect x="101.8" y="56" width="1.2" height="9"/><rect x="103.6" y="56" width="1.2" height="9"/><path d="M105.5 56h7l-4.5 4.5 5 4.5h-7.5z"/></g>
<rect x="123" y="59" width="15" height="1.3" fill="#9a9fc2"/>
<rect x="141.5" y="48.5" width="22" height="22" fill="#23329a"/>
<g fill="#4e5cae"><rect x="146" y="56" width="1.2" height="9"/><rect x="147.8" y="56" width="1.2" height="9"/><rect x="149.6" y="56" width="1.2" height="9"/><path d="M151.5 56h7l-4.5 4.5 5 4.5h-7.5z"/></g>
<rect x="169" y="59" width="15" height="1.3" fill="#9a9fc2"/>
<rect x="8" y="82" width="15" height="1.3" fill="#9a9fc2"/>
<rect x="26.5" y="71.5" width="22" height="22" fill="#23329a"/>
<g fill="#4e5cae"><rect x="31" y="79" width="1.2" height="9"/><rect x="32.8" y="79" width="1.2" height="9"/><rect x="34.6" y="79" width="1.2" height="9"/><path d="M36.5 79h7l-4.5 4.5 5 4.5h-7.5z"/></g>
<rect x="54" y="82" width="15" height="1.3" fill="#9a9fc2"/>
<rect x="72.5" y="71.5" width="22" height="22" fill="#23329a"/>
<g fill="#4e5cae"><rect x="77" y="79" width="1.2" height="9"/><rect x="78.8" y="79" width="1.2" height="9"/><rect x="80.6" y="79" width="1.2" height="9"/><path d="M82.5 79h7l-4.5 4.5 5 4.5h-7.5z"/></g>
<rect x="100" y="82" width="15" height="1.3" fill="#9a9fc2"/>
<rect x="118.5" y="71.5" width="22" height="22" fill="#23329a"/>
<g fill="#4e5cae"><rect x="123" y="79" width="1.2" height="9"/><rect x="124.8" y="79" width="1.2" height="9"/><rect x="126.6" y="79" width="1.2" height="9"/><path d="M128.5 79h7l-4.5 4.5 5 4.5h-7.5z"/></g>
<rect x="146" y="82" width="15" height="1.3" fill="#9a9fc2"/>
<rect x="164.5" y="71.5" width="22" height="22" fill="#23329a"/>
<g fill="#4e5cae"><rect x="169" y="79" width="1.2" height="9"/><rect x="170.8" y="79" width="1.2" height="9"/><rect x="172.6" y="79" width="1.2" height="9"/><path d="M174.5 79h7l-4.5 4.5 5 4.5h-7.5z"/></g>
<rect x="3.5" y="94.5" width="22" height="22" fill="#23329a"/>
<g fill="#4e5cae"><rect x="8" y="102" width="1.2" height="9"/><rect x="9.8" y="102" width="1.2" height="9"/><rect x="11.6" y="102" width="1.2" height="9"/><path d="M13.5 102h7l-4.5 4.5 5 4.5h-7.5z"/></g>
<rect x="31" y="105" width="15" height="1.3" fill="#9a9fc2"/>
<rect x="49.5" y="94.5" width="22" height="22" fill="#23329a"/>
<g fill="#4e5cae"><rect x="54" y="102" width="1.2" height="9"/><rect x="55.8" y="102" width="1.2" height="9"/><rect x="57.6" y="102" width="1.2" height="9"/><path d="M59.5 102h7l-4.5 4.5 5 4.5h-7.5z"/></g>
<rect x="77" y="105" width="15" height="1.3" fill="#9a9fc2"/>
<rect x="95.5" y="94.5" width="22" height="22" fill="#23329a"/>
<g fill="#4e5cae"><rect x="100" y="102" width="1.2" height="9"/><rect x="101.8" y="102" width="1.2" height="9"/><rect x="103.6" y="102" width="1.2" height="9"/><path d="M105.5 102h7l-4.5 4.5 5 4.5h-7.5z"/></g>
<rect x="123" y="105" width="15" height="1.3" fill="#9a9fc2"/>
<rect x="141.5" y="94.5" width="22" height="22" fill="#23329a"/>
<g fill="#4e5cae"><rect x="146" y="102" width="1.2" height="9"/><rect x="147.8" y="102" width="1.2" height="9"/><rect x="149.6" y="102" width="1.2" height="9"/><path d="M151.5 102h7l-4.5 4.5 5 4.5h-7.5z"/></g>
<rect x="169" y="105" width="15" height="1.3" fill="#9a9fc2"/>
<!-- person -->
<g filter="url(#soft)">
<path d="M28 106 C34 94 44 88 56 84 L72 80 L98 78 C112 82 124 90 132 100 L136 106 Z" fill="#1b4852"/>
<path d="M98 78 C110 83 122 90 128 100 L132 106 L110 106 C108 96 104 88 99 84 Z" fill="#235a66"/>
<path d="M79 88 C84 92 94 92 99 85 L101 96 L100 106 L80 106 Z" fill="#efefef"/>
<path d="M107 96 C108 92 112 92 114 95 L118 106 L109 106 Z" fill="#d7b3a0"/>
<path d="M65 60 C64 74 67 84 73 89 C78 93 88 94 94 88 C99 82 101 72 100 60 Z" fill="#cca38e"/>
<path d="M70 65 C74 63.5 78 63.5 80 65 L80 66.8 C77 66 73 66 70 66.8 Z M86 65 C90 63.5 95 63.5 97 65 L97 66.8 C94 66 90 66 86 66.8 Z" fill="#4a3630"/><path d="M66 62 L100 62 L100 66 C90 64 76 64 66 66 Z" fill="#a9806c" opacity="0.5"/>
<path d="M76 82 C80 80.5 88 80.5 92 82 L91 84.5 C86 83 82 83 77 84.5 Z" fill="#5a463c"/>
<path d="M83 70 L81 79 L86 80 Z" fill="#b18770"/>
<path d="M80 31 C72 31 66 35 63 40 C58 44 56 49 57 54 C56 60 58 64 62 67 C66 66 68 63 70 62 C76 60 84 62 88 62 C94 62 98 64 103 68 C106 62 107 52 106 45 C105 39 101 35 96 33 C91 31 86 30 80 31 Z" fill="#262220"/><circle cx="79.6" cy="32.1" r="2.2" fill="#262220"/><circle cx="72.1" cy="33.2" r="1.9" fill="#262220"/><circle cx="65.3" cy="36.5" r="2.1" fill="#262220"/><circle cx="62.6" cy="41.7" r="2.3" fill="#262220"/><circle cx="60.5" cy="46.0" r="2.4" fill="#262220"/><circle cx="57.5" cy="51.2" r="2.7" fill="#262220"/><circle cx="59.0" cy="56.3" r="2.5" fill="#262220"/><circle cx="59.4" cy="61.4" r="2.4" fill="#262220"/><circle cx="62.7" cy="64.3" r="2.7" fill="#262220"/><circle cx="96.0" cy="34.3" r="2.7" fill="#262220"/><circle cx="101.3" cy="38.6" r="2.2" fill="#262220"/><circle cx="103.4" cy="42.9" r="2.7" fill="#262220"/><circle cx="104.5" cy="48.4" r="1.9" fill="#262220"/><circle cx="103.6" cy="55.7" r="2.2" fill="#262220"/><circle cx="103.2" cy="60.7" r="2.3" fill="#262220"/><circle cx="87.8" cy="31.3" r="2.4" fill="#262220"/><circle cx="75.1" cy="32.1" r="2.5" fill="#262220"/><path d="M70 40 C76 36 84 35 90 38 M66 48 C70 45 74 44 78 45 M88 44 C92 43 97 45 100 48" stroke="#3e3834" stroke-width="1.2" fill="none"/>
</g>
<rect x="2" y="90" width="79" height="16" fill="rgba(45,45,50,0.72)"/>
<text x="6" y="102.5" font-family="Liberation Sans" font-size="10" fill="#f7ead4">Katsuaki Osawa</text>
</g>
</svg>
<script>
(function(){
  var t=document.createElement('span');
  t.style.cssText='position:absolute;left:0;top:0;font-size:100px;line-height:1;white-space:nowrap;visibility:hidden;font-family:"Liberation Sans",sans-serif';
  t.textContent='\u3042\u5c0e';
  document.body.appendChild(t);
  var w=t.getBoundingClientRect().width/2;
  document.body.removeChild(t);
  if(!(w>0) || w>=92) return;
  var ex=((100-w)/100).toFixed(3)+'em';
  var re=/[\u3000-\u30ff\u3400-\u9fff\uff00-\uffef\u2010-\u203b]+/g;
  var walker=document.createTreeWalker(document.body,NodeFilter.SHOW_TEXT,null);
  var nodes=[],n;
  while((n=walker.nextNode())){ if(n.parentNode && n.parentNode.nodeName!=='SCRIPT' && n.parentNode.nodeName!=='STYLE' && !(n.parentNode instanceof SVGElement) && re.test(n.nodeValue)) nodes.push(n); re.lastIndex=0; }
  nodes.forEach(function(node){
    var txt=node.nodeValue, frag=document.createDocumentFragment(), last=0, m;
    re.lastIndex=0;
    while((m=re.exec(txt))){
      if(m.index>last) frag.appendChild(document.createTextNode(txt.slice(last,m.index)));
      var sp=document.createElement('span');
      sp.style.letterSpacing='calc('+ex+' + '+(getComputedStyle(node.parentNode).letterSpacing==='normal'?'0px':getComputedStyle(node.parentNode).letterSpacing)+')';
      var cs=getComputedStyle(node.parentNode); var bw=(parseInt(cs.fontWeight)||400)>=600;
      sp.style.webkitTextStroke=(bw?'0.12em':'0.035em')+' currentColor';
      sp.textContent=m[0];
      frag.appendChild(sp);
      last=m.index+m[0].length;
    }
    if(last<txt.length) frag.appendChild(document.createTextNode(txt.slice(last)));
    node.parentNode.replaceChild(frag,node);
  });
})();
</script>
</body>
</html>
